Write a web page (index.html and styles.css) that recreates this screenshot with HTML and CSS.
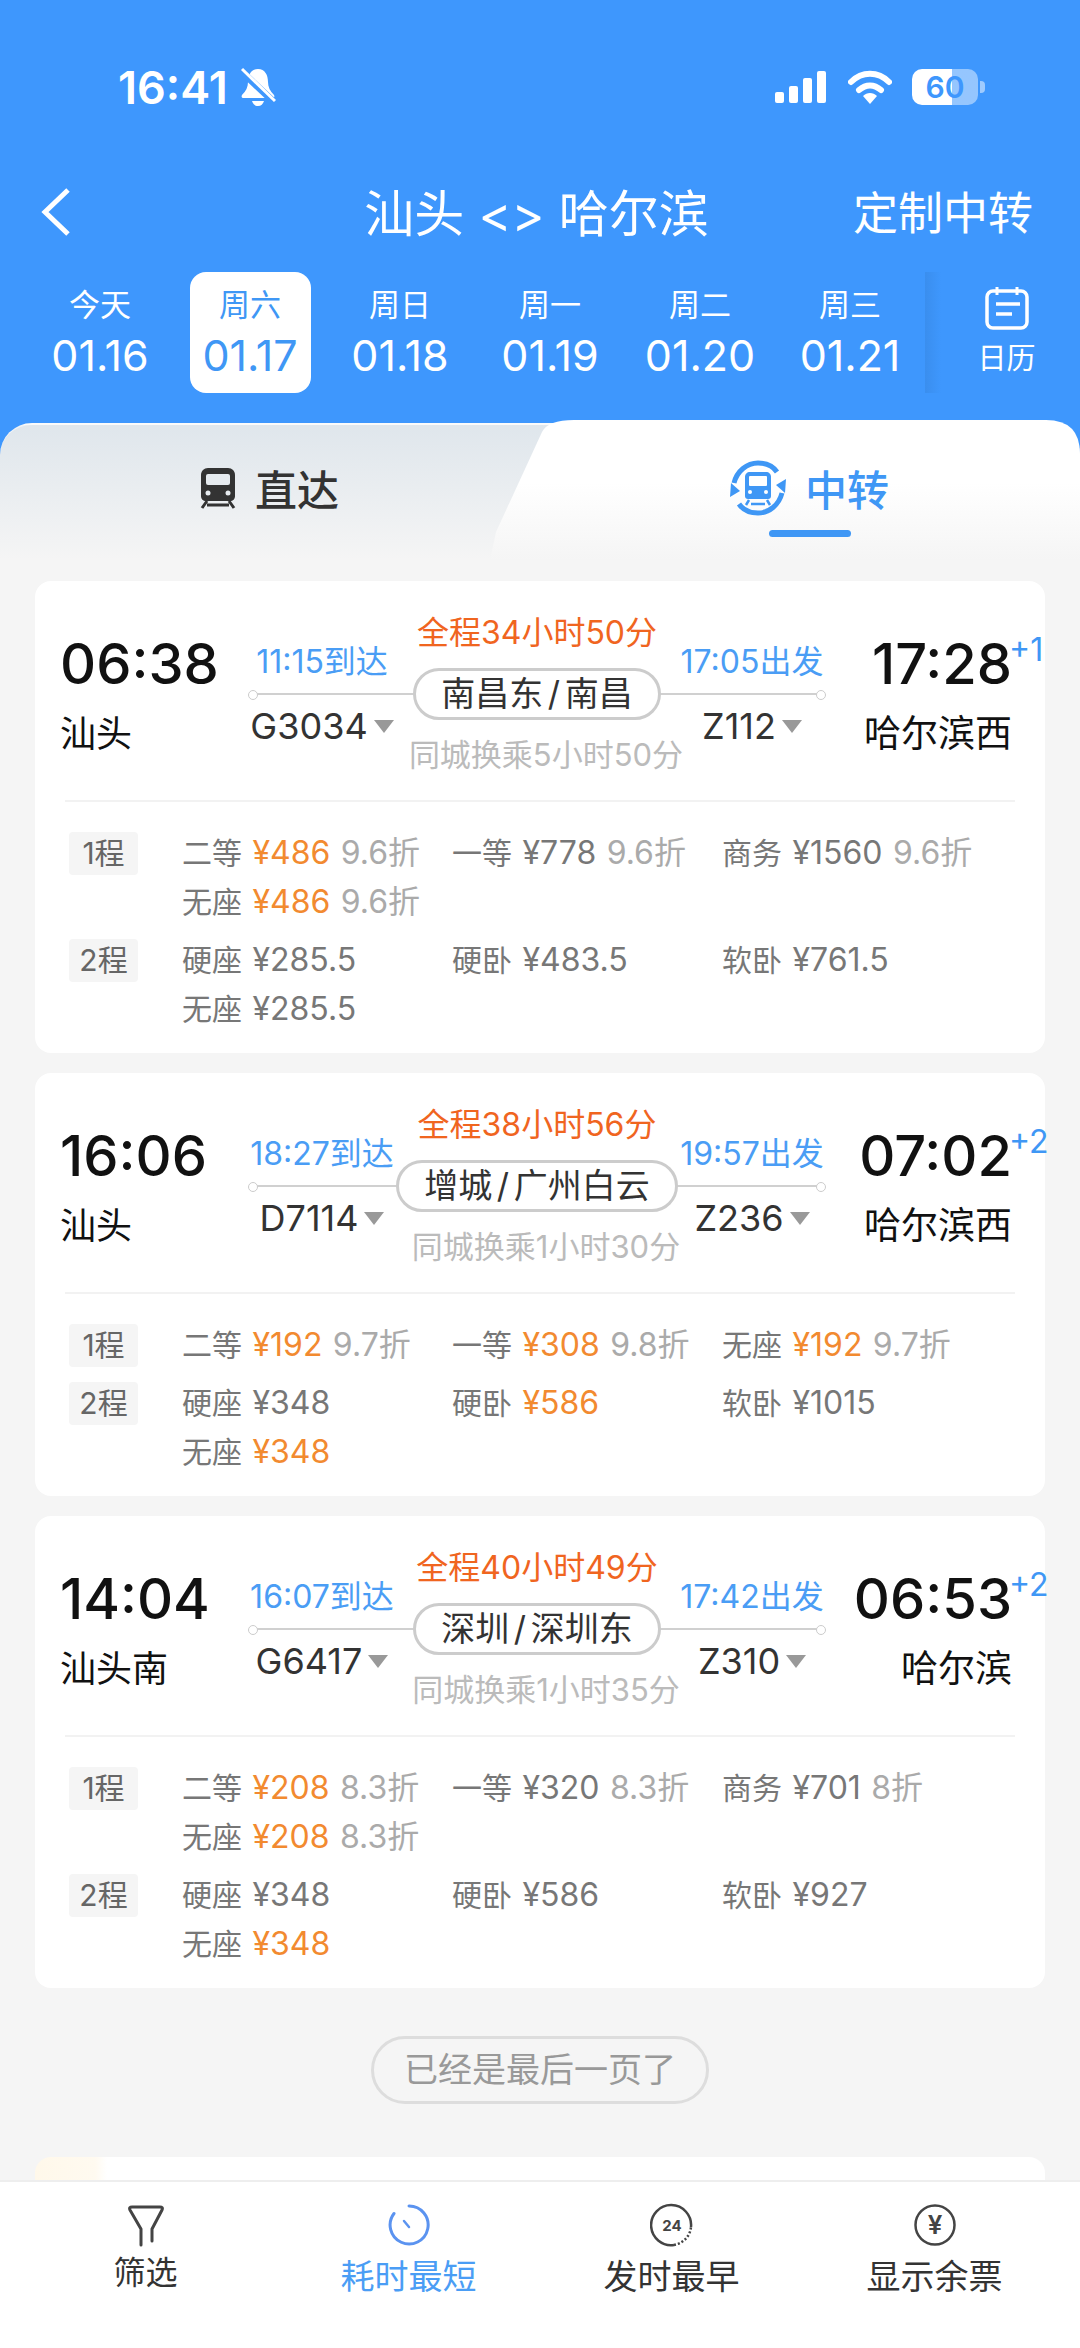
FILE: index.html
```html
<!DOCTYPE html>
<html lang="zh-CN">
<head>
    <meta charset="UTF-8">
    <meta name="viewport" content="width=device-width, initial-scale=1.0">
    <title>汕头 &lt;&gt; 哈尔滨</title>
    <link rel="stylesheet" href="styles.css">
</head>
<body>

<div class="top">
    <div class="status">
        <div class="status-left">
            <span class="clock">16:41</span>
            <svg class="bell" viewBox="0 0 36 40" width="36" height="40">
                <path d="M18 2c-7 0-10 6-10 13 0 5-2 9-6 13-1 2 0 3 2 3h28c2 0 3-1 2-3-4-4-6-8-6-13 0-7-3-13-10-13z" fill="#fff"/>
                <path d="M12 34h12c-1 3-3 5-6 5s-5-2-6-5z" fill="#fff"/>
                <path d="M1 4l34 32" stroke="#3e97fd" stroke-width="7"/>
                <path d="M2 2l33 32" stroke="#fff" stroke-width="3"/>
            </svg>
        </div>
        <div class="status-right">
            <div class="signal"><i class="b1"></i><i class="b2"></i><i class="b3"></i><i class="b4"></i></div>
            <svg viewBox="0 0 44 34" width="44" height="34">
                <path d="M3 12C14 1 30 1 41 12" fill="none" stroke="#fff" stroke-width="6" stroke-linecap="round"/>
                <path d="M11 20c7-6 15-6 22 0" fill="none" stroke="#fff" stroke-width="6" stroke-linecap="round"/>
                <path d="M15 26c4-4 10-4 14 0l-7 8z" fill="#fff"/>
            </svg>
            <div class="battery"><span>60</span></div>
            <i class="battery-nub"></i>
        </div>
    </div>

    <div class="nav">
        <svg class="back" viewBox="0 0 32 48" width="32" height="48">
            <path d="M28 2L5 24l23 22" fill="none" stroke="#fff" stroke-width="5"/>
        </svg>
        <div class="nav-title">汕头 &lt;&gt; 哈尔滨</div>
        <div class="nav-action">定制中转</div>
    </div>

    <div class="dates">
        <div class="date"><span class="date-week">今天</span><span class="date-day">01.16</span></div>
        <div class="date date-on"><span class="date-week">周六</span><span class="date-day">01.17</span></div>
        <div class="date"><span class="date-week">周日</span><span class="date-day">01.18</span></div>
        <div class="date"><span class="date-week">周一</span><span class="date-day">01.19</span></div>
        <div class="date"><span class="date-week">周二</span><span class="date-day">01.20</span></div>
        <div class="date"><span class="date-week">周三</span><span class="date-day">01.21</span></div>
        <div class="calendar">
            <svg viewBox="0 0 44 44" width="44" height="44">
                <rect x="2" y="5" width="40" height="37" rx="6" fill="none" stroke="#fff" stroke-width="3.5"/>
                <path d="M12 1v8M32 1v8" stroke="#fff" stroke-width="3"/>
                <path d="M11 18h24M11 28h16" stroke="#fff" stroke-width="3.5"/>
            </svg>
            <span>日历</span>
        </div>
    </div>

    <div class="tabs">
        <div class="tab">
            <svg viewBox="0 0 38 42" width="38" height="42">
                <path d="M9 1h20c4 0 7 3 7 7v21c0 3-2 5-5 5H7c-3 0-5-2-5-5V8c0-4 3-7 7-7z" fill="#333"/>
                <rect x="7" y="7" width="24" height="11" rx="2" fill="#e6ebef"/>
                <circle cx="9" cy="26" r="2.5" fill="#e6ebef"/>
                <circle cx="29" cy="26" r="2.5" fill="#e6ebef"/>
                <path d="M8 34l-5 7M30 34l5 7M8 38h22" stroke="#333" stroke-width="3"/>
            </svg>
            <span>直达</span>
        </div>
        <div class="tab tab-on">
            <svg viewBox="0 0 58 58" width="58" height="58">
                <path d="M5 24C8 12 18 4 29 4c8 0 15 3 19 9" fill="none" stroke="#3f97f5" stroke-width="5"/>
                <path d="M53 34c-3 12-13 20-24 20-8 0-15-3-19-9" fill="none" stroke="#3f97f5" stroke-width="5"/>
                <path d="M57 20l-1 14-9-8zM1 38l1-14 9 8z" fill="#3f97f5"/>
                <path d="M21 13h16c3 0 5 2 5 5v19c0 2-1 3-3 3H19c-2 0-3-1-3-3V18c0-3 2-5 5-5z" fill="#3f97f5"/>
                <rect x="20" y="17" width="18" height="10" rx="1" fill="#fff"/>
                <circle cx="21" cy="33" r="2" fill="#fff"/>
                <circle cx="37" cy="33" r="2" fill="#fff"/>
                <path d="M20 41l-3 5M38 41l3 5M22 45h14" stroke="#3f97f5" stroke-width="2.5"/>
            </svg>
            <span>中转</span>
        </div>
    </div>
</div>

<div class="list">

    <div class="card">
        <div class="card-top">
            <div class="end">
                <div class="time">06:38</div>
                <div class="city">汕头</div>
            </div>
            <div class="route">
                <div class="rail"></div>
                <div class="side side-left">
                    <div class="stamp">11:15到达</div>
                    <div class="train">G3034<i class="arrow"></i></div>
                </div>
                <div class="middle">
                    <div class="total">全程34小时50分</div>
                    <div class="station">南昌东 / 南昌</div>
                    <div class="transfer">同城换乘5小时50分</div>
                </div>
                <div class="side side-right">
                    <div class="stamp">17:05出发</div>
                    <div class="train">Z112<i class="arrow"></i></div>
                </div>
            </div>
            <div class="end end-right">
                <div class="time">17:28<span class="plus">+1</span></div>
                <div class="city">哈尔滨西</div>
            </div>
        </div>
        <div class="fares">
            <div class="leg">
                <div class="leg-tag">1程</div>
                <div class="leg-grid">
                    <div>二等 <b>¥486</b> <em>9.6折</em></div>
                    <div>一等 <span>¥778</span> <em>9.6折</em></div>
                    <div>商务 <span>¥1560</span> <em>9.6折</em></div>
                    <div>无座 <b>¥486</b> <em>9.6折</em></div>
                </div>
            </div>
            <div class="leg">
                <div class="leg-tag">2程</div>
                <div class="leg-grid">
                    <div>硬座 <span>¥285.5</span></div>
                    <div>硬卧 <span>¥483.5</span></div>
                    <div>软卧 <span>¥761.5</span></div>
                    <div>无座 <span>¥285.5</span></div>
                </div>
            </div>
        </div>
    </div>

    <div class="card">
        <div class="card-top">
            <div class="end">
                <div class="time">16:06</div>
                <div class="city">汕头</div>
            </div>
            <div class="route">
                <div class="rail"></div>
                <div class="side side-left">
                    <div class="stamp">18:27到达</div>
                    <div class="train">D7114<i class="arrow"></i></div>
                </div>
                <div class="middle">
                    <div class="total">全程38小时56分</div>
                    <div class="station">增城 / 广州白云</div>
                    <div class="transfer">同城换乘1小时30分</div>
                </div>
                <div class="side side-right">
                    <div class="stamp">19:57出发</div>
                    <div class="train">Z236<i class="arrow"></i></div>
                </div>
            </div>
            <div class="end end-right">
                <div class="time">07:02<span class="plus">+2</span></div>
                <div class="city">哈尔滨西</div>
            </div>
        </div>
        <div class="fares">
            <div class="leg">
                <div class="leg-tag">1程</div>
                <div class="leg-grid">
                    <div>二等 <b>¥192</b> <em>9.7折</em></div>
                    <div>一等 <b>¥308</b> <em>9.8折</em></div>
                    <div>无座 <b>¥192</b> <em>9.7折</em></div>
                </div>
            </div>
            <div class="leg">
                <div class="leg-tag">2程</div>
                <div class="leg-grid">
                    <div>硬座 <span>¥348</span></div>
                    <div>硬卧 <b>¥586</b></div>
                    <div>软卧 <span>¥1015</span></div>
                    <div>无座 <b>¥348</b></div>
                </div>
            </div>
        </div>
    </div>

    <div class="card">
        <div class="card-top">
            <div class="end">
                <div class="time">14:04</div>
                <div class="city">汕头南</div>
            </div>
            <div class="route">
                <div class="rail"></div>
                <div class="side side-left">
                    <div class="stamp">16:07到达</div>
                    <div class="train">G6417<i class="arrow"></i></div>
                </div>
                <div class="middle">
                    <div class="total">全程40小时49分</div>
                    <div class="station">深圳 / 深圳东</div>
                    <div class="transfer">同城换乘1小时35分</div>
                </div>
                <div class="side side-right">
                    <div class="stamp">17:42出发</div>
                    <div class="train">Z310<i class="arrow"></i></div>
                </div>
            </div>
            <div class="end end-right">
                <div class="time">06:53<span class="plus">+2</span></div>
                <div class="city">哈尔滨</div>
            </div>
        </div>
        <div class="fares">
            <div class="leg">
                <div class="leg-tag">1程</div>
                <div class="leg-grid">
                    <div>二等 <b>¥208</b> <em>8.3折</em></div>
                    <div>一等 <span>¥320</span> <em>8.3折</em></div>
                    <div>商务 <span>¥701</span> <em>8折</em></div>
                    <div>无座 <b>¥208</b> <em>8.3折</em></div>
                </div>
            </div>
            <div class="leg">
                <div class="leg-tag">2程</div>
                <div class="leg-grid">
                    <div>硬座 <span>¥348</span></div>
                    <div>硬卧 <span>¥586</span></div>
                    <div>软卧 <span>¥927</span></div>
                    <div>无座 <b>¥348</b></div>
                </div>
            </div>
        </div>
    </div>

    <div class="last-page">已经是最后一页了</div>
    <div class="card card-next"></div>
</div>

<div class="toolbar">
    <div class="tool tool-filter">
        <svg viewBox="0 0 36 44" width="36" height="44">
            <path d="M13 42V26L2 7c-1-2 0-3 2-3h28c2 0 3 1 2 3L24 26v12" fill="none" stroke="#444" stroke-width="3" stroke-linecap="round" stroke-linejoin="round"/>
        </svg>
        <span>筛选</span>
    </div>
    <div class="tool tool-on">
        <svg viewBox="0 0 44 44" width="44" height="44">
            <path d="M22 3a19 19 0 1 1-15 7.5" fill="none" stroke="#5b93f0" stroke-width="3" stroke-linecap="round"/>
            <path d="M17 18l5 6" stroke="#5b93f0" stroke-width="2.5" stroke-linecap="round"/>
        </svg>
        <span>耗时最短</span>
    </div>
    <div class="tool">
        <svg viewBox="0 0 44 44" width="44" height="44">
            <path d="M41 24A20 20 0 1 0 24 41.900" fill="none" stroke="#444" stroke-width="2.500"/>
            <path d="M24 41.900A20 20 0 0 0 41 24" fill="none" stroke="#444" stroke-width="2.500" stroke-dasharray="2 2"/>
            <text class="icon-text" x="22" y="28" text-anchor="middle">24</text>
        </svg>
        <span>发时最早</span>
    </div>
    <div class="tool">
        <svg viewBox="0 0 44 44" width="44" height="44">
            <circle cx="22" cy="22" r="19.500" fill="none" stroke="#444" stroke-width="2.500"/>
            <text class="icon-yen" x="22" y="31" text-anchor="middle">¥</text>
        </svg>
        <span>显示余票</span>
    </div>
</div>

</body>
</html>
```

FILE: styles.css
```css
* {
    box-sizing: border-box;
}

body {
    margin: 0;
    width: 1080px;
    height: 2348px;
    overflow: hidden;
    display: flex;
    flex-direction: column;
    background-color: #f5f5f5;
    color: #333;
    font-family: Inter, "Noto Sans CJK SC", sans-serif;
}

.top {
    background-color: #3e97fd;
    color: white;
}

/* status bar */
.status {
    height: 174px;
    display: flex;
    justify-content: space-between;
    align-items: center;
    padding: 0 95px 0 118px;
}
.status-left {
    display: flex;
    align-items: center;
    gap: 12px;
}
.clock {
    font-size: 45px;
    font-weight: 600;
}
.status-right {
    display: flex;
    align-items: center;
    gap: 20px;
}
.signal {
    display: flex;
    align-items: flex-end;
    gap: 5px;
    height: 32px;
    margin-right: 2px;
}
.signal i {
    width: 9px;
    background-color: white;
    border-radius: 2px;
}
.signal .b1 { height: 11px; }
.signal .b2 { height: 17px; }
.signal .b3 { height: 25px; }
.signal .b4 { height: 32px; }
.battery {
    width: 66px;
    height: 36px;
    border-radius: 10px;
    background: linear-gradient(90deg, white 60%, rgba(255,255,255,0.45) 60%);
    color: #3e97fd;
    font-size: 30px;
    font-weight: 600;
    line-height: 36px;
    text-align: center;
}
.battery-nub {
    width: 5px;
    height: 12px;
    margin-left: -18px;
    border-radius: 0 4px 4px 0;
    background-color: rgba(255,255,255,0.5);
}

/* title row */
.nav {
    height: 76px;
    display: grid;
    grid-template-columns: 1fr auto 1fr;
    align-items: center;
    padding: 0 47px 0 40px;
}
.nav-title {
    margin-bottom: 4px;
    font-size: 50px;
}
.nav-action {
    margin-bottom: 4px;
    font-size: 45px;
    text-align: right;
}

/* date strip */
.dates {
    display: flex;
    margin-top: 22px;
    padding-left: 25px;
    height: 121px;
}
.date {
    width: 150px;
    display: flex;
    flex-direction: column;
    align-items: center;
    gap: 8px;
    padding-top: 15px;
}
.date-on {
    width: 121px;
    margin: 0 14.5px;
    background-color: white;
    border-radius: 16px;
    color: #3f97f5;
}
.date-week {
    font-size: 31px;
    line-height: 36px;
}
.date-day {
    font-size: 43px;
    line-height: 48px;
}
.calendar {
    flex: 1;
    display: flex;
    flex-direction: column;
    align-items: center;
    gap: 5px;
    padding: 14px 0 0 8px;
    font-size: 29px;
    background: linear-gradient(90deg, #3a8eee, #3e97fd 16px);
}

/* direct / transfer tabs */
.tabs {
    position: relative;
    height: 140px;
    margin-top: 27px;
    display: grid;
    grid-template-columns: 538px 1fr;
    font-size: 42px;
    font-weight: 500;
    color: #333;
}
.tabs::before {
    content: "";
    position: absolute;
    top: 3px;
    left: 0;
    right: 0;
    bottom: 0;
    border-top: 2px solid rgba(255,255,255,0.5);
    border-radius: 32px 32px 0 0;
    background: linear-gradient(#dfe6ec, #f5f5f5);
}
.tab {
    position: relative;
    display: flex;
    justify-content: center;
    align-items: center;
    gap: 18px;
    padding-bottom: 5px;
}
.tab-on {
    color: #3f97f5;
}
.tab-on::before {
    content: "";
    position: absolute;
    top: 0;
    left: -48px;
    width: 590px;
    height: 140px;
    background: linear-gradient(white 45%, #f5f5f5);
    clip-path: path("M6 112L52 12Q58 0 84 0L556 0Q590 0 590 34L590 140L0 140Z");
}
.tab-on::after {
    content: "";
    position: absolute;
    left: 231px;
    bottom: 23px;
    width: 82px;
    height: 7px;
    border-radius: 4px;
    background-color: #3f97f5;
}
.tab svg,
.tab span {
    position: relative;
}

/* result list */
.list {
    flex: 1;
    overflow: hidden;
    display: flex;
    flex-direction: column;
    gap: 20px;
    padding: 21px 35px 0;
}
.card {
    flex: none;
    background-color: white;
    border-radius: 16px;
}
.card-top {
    display: grid;
    grid-template-columns: 188px 578px 1fr;
    height: 219px;
    margin: 0 33px 0 25px;
    padding-top: 35px;
}
.end {
    padding-top: 16px;
}
.end-right {
    text-align: right;
}
.end-right .city {
    font-size: 37px;
}
.time {
    position: relative;
    font-size: 56px;
    font-weight: 500;
    line-height: 64px;
    color: #111;
}
.plus {
    position: absolute;
    left: 100%;
    top: -2px;
    margin-left: -3px;
    font-size: 32px;
    font-weight: 400;
    line-height: 40px;
    color: #3f97f5;
}
.city {
    margin-top: 16px;
    font-size: 36px;
    line-height: 44px;
    color: #111;
}

.route {
    position: relative;
    display: grid;
    grid-template-columns: 148px 282px 148px;
    height: 156px;
}
.rail {
    position: absolute;
    left: 2px;
    right: 2px;
    top: 77px;
    height: 2px;
    background-color: #d0d0d0;
}
.rail::before,
.rail::after {
    content: "";
    position: absolute;
    top: -3px;
    width: 8px;
    height: 8px;
    border: 1px solid #ccc;
    border-radius: 50%;
    background-color: white;
}
.rail::before { left: -2px; }
.rail::after { right: -2px; }
.side {
    position: relative;
    display: flex;
    flex-direction: column;
    align-items: center;
    justify-content: center;
    gap: 28px;
}
.stamp {
    font-size: 32px;
    line-height: 35px;
    color: #4a9df5;
    white-space: nowrap;
}
.train {
    font-size: 36px;
    line-height: 38px;
    color: #333;
    white-space: nowrap;
}
.arrow {
    display: inline-block;
    margin-left: 6px;
    border-style: solid;
    border-width: 13px 10px 0;
    border-color: #999 transparent transparent;
    vertical-align: 6px;
}
.middle {
    position: relative;
    display: flex;
    flex-direction: column;
    align-items: center;
    justify-content: space-between;
}
.total {
    font-size: 32px;
    line-height: 34px;
    color: #f0651f;
}
.station {
    padding: 0 25px;
    height: 52px;
    border: 3px solid #ccc;
    border-radius: 26px;
    background-color: white;
    font-size: 34px;
    line-height: 46px;
    word-spacing: -5px;
    color: #333;
    white-space: nowrap;
}
.transfer {
    margin-left: 18px;
    font-size: 31px;
    line-height: 34px;
    color: #bbb;
    white-space: nowrap;
}

/* fares */
.fares {
    display: flex;
    flex-direction: column;
    gap: 9px;
    margin: 0 30px;
    padding: 27px 4px 19px;
    border-top: 2px solid #f2f2f2;
}
.leg {
    display: flex;
}
.leg-tag {
    width: 69px;
    height: 43px;
    margin: 3px 44px 0 0;
    border-radius: 4px;
    background-color: #f5f5f5;
    font-size: 30px;
    line-height: 43px;
    text-align: center;
    color: #666;
}
.leg-grid {
    display: grid;
    grid-template-columns: repeat(3, 270px);
    grid-auto-rows: 49px;
    font-size: 30px;
    line-height: 49px;
    word-spacing: 2px;
    color: #777;
    white-space: nowrap;
}
.leg-grid span,
.leg-grid b,
.leg-grid em {
    font-size: 32px;
    line-height: 1;
}
.leg-grid b {
    font-weight: 400;
    color: #f28a30;
}
.leg-grid em {
    font-style: normal;
    color: #aaa;
}

.last-page {
    align-self: center;
    margin-top: 28px;
    padding: 0 30px;
    height: 68px;
    border: 3px solid #ddd;
    border-radius: 34px;
    font-size: 34px;
    line-height: 62px;
    color: #999;
}
.card-next {
    height: 60px;
    margin-top: 33px;
    background: linear-gradient(90deg, #fff8ea, #fffaf0 60px, white 72px);
}

/* bottom toolbar */
.toolbar {
    flex: none;
    position: relative;
    height: 168px;
    display: grid;
    grid-template-columns: repeat(4, 1fr);
    padding: 21px 14px 0;
    border-top: 2px solid #eee;
    background-color: white;
}
.tool {
    display: flex;
    flex-direction: column;
    align-items: center;
    font-size: 34px;
    line-height: 44px;
    color: #333;
}
.tool span {
    margin-top: 8px;
}
.tool-filter span {
    margin-top: 4px;
    font-size: 32px;
}
.tool-on {
    color: #4a9df5;
}
.icon-text {
    font-size: 15px;
    font-weight: 700;
    fill: #444;
}
.icon-yen {
    font-size: 26px;
    font-weight: 600;
    fill: #444;
}
```
